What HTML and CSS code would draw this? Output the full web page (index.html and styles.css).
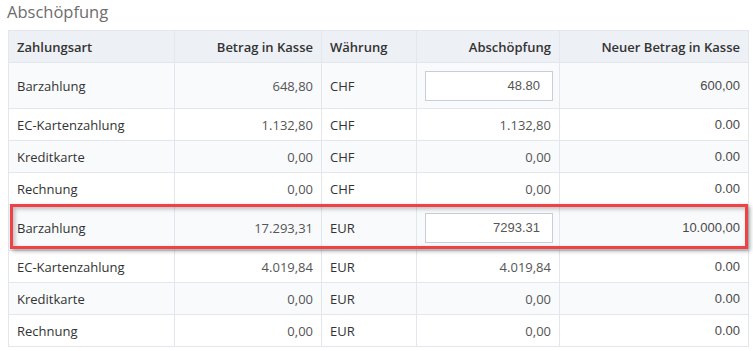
FILE: index.html
```html
<!DOCTYPE html>
<html lang="de">
<head>
<meta charset="utf-8">
<title>Abschöpfung</title>
<link rel="stylesheet" href="styles.css">
</head>
<body>
<h2 class="title">Abschöpfung</h2>
<div class="wrap">
<table class="grid">
<thead>
<tr><th class="c1">Zahlungsart</th><th class="c2 r">Betrag in Kasse</th><th class="c3">Währung</th><th class="c4 r">Abschöpfung</th><th class="c5 r">Neuer Betrag in Kasse</th></tr>
</thead>
<tbody>
<tr class="odd tall"><td>Barzahlung</td><td class="r">648,80</td><td>CHF</td><td class="r"><input class="amount" type="text" value="48.80"></td><td class="r alt">600,00</td></tr>
<tr><td>EC-Kartenzahlung</td><td class="r">1.132,80</td><td>CHF</td><td class="r">1.132,80</td><td class="r alt">0.00</td></tr>
<tr class="odd"><td>Kreditkarte</td><td class="r">0,00</td><td>CHF</td><td class="r">0,00</td><td class="r alt">0.00</td></tr>
<tr><td>Rechnung</td><td class="r">0,00</td><td>CHF</td><td class="r">0,00</td><td class="r alt">0.00</td></tr>
<tr class="odd tall"><td>Barzahlung</td><td class="r">17.293,31</td><td>EUR</td><td class="r"><input class="amount" type="text" value="7293.31"></td><td class="r alt">10.000,00</td></tr>
<tr><td>EC-Kartenzahlung</td><td class="r">4.019,84</td><td>EUR</td><td class="r">4.019,84</td><td class="r alt">0.00</td></tr>
<tr class="odd"><td>Kreditkarte</td><td class="r">0,00</td><td>EUR</td><td class="r">0,00</td><td class="r alt">0.00</td></tr>
<tr><td>Rechnung</td><td class="r">0,00</td><td>EUR</td><td class="r">0,00</td><td class="r alt">0.00</td></tr>
</tbody>
</table>
<div class="mark"></div>
</div>
</body>
</html>
```
FILE: styles.css
```css
html, body {
  margin: 0;
  padding: 0;
  background: #ffffff;
}
body {
  padding: 0 5px 0 8px;
  font-family: "Open Sans", "Liberation Sans", sans-serif;
  font-size: 13px;
  color: #333333;
}
.title {
  margin: 0 0 0 -1px;
  height: 30px;
  font-size: 16.5px;
  line-height: 23px;
  font-weight: 400;
  color: #6d6d6d;
}
.wrap {
  position: relative;
}
.grid {
  width: 740px;
  border-collapse: collapse;
  table-layout: fixed;
}
.grid th, .grid td {
  border: 1px solid #e3e6ec;
  padding: 0 8px;
  height: 31px;
  vertical-align: middle;
  text-align: left;
  white-space: nowrap;
}
.grid th {
  background: #edf0f5;
  font-weight: 600;
  color: #333333;
}
.c1 { width: 149px; }
.c2 { width: 130px; }
.c3 { width: 78px; }
.c4 { width: 126px; }
.c5 { width: 172px; }
.grid .r { text-align: right; }
.grid td.r { color: #555555; }
.grid td.alt {
  font-family: "Liberation Sans", Arial, sans-serif;
  color: #4a4a4a;
}
.grid tr.odd td { background: #f9fafc; }
.grid tr.tall td { height: 45px; }
.amount {
  box-sizing: border-box;
  width: 128px;
  height: 30px;
  margin: 0;
  padding: 0 12px;
  border: 1px solid #c8cddd;
  background: #ffffff;
  font-family: "Liberation Sans", Arial, sans-serif;
  font-size: 13px;
  color: #555555;
  text-align: right;
  vertical-align: middle;
}
.mark {
  position: absolute;
  left: 2px;
  top: 174px;
  width: 732px;
  height: 39px;
  border: 3px solid #ee4247;
  box-shadow: 2px 2px 4px rgba(0, 0, 0, 0.35), inset 2px 2px 4px rgba(0, 0, 0, 0.25);
  pointer-events: none;
}
```
